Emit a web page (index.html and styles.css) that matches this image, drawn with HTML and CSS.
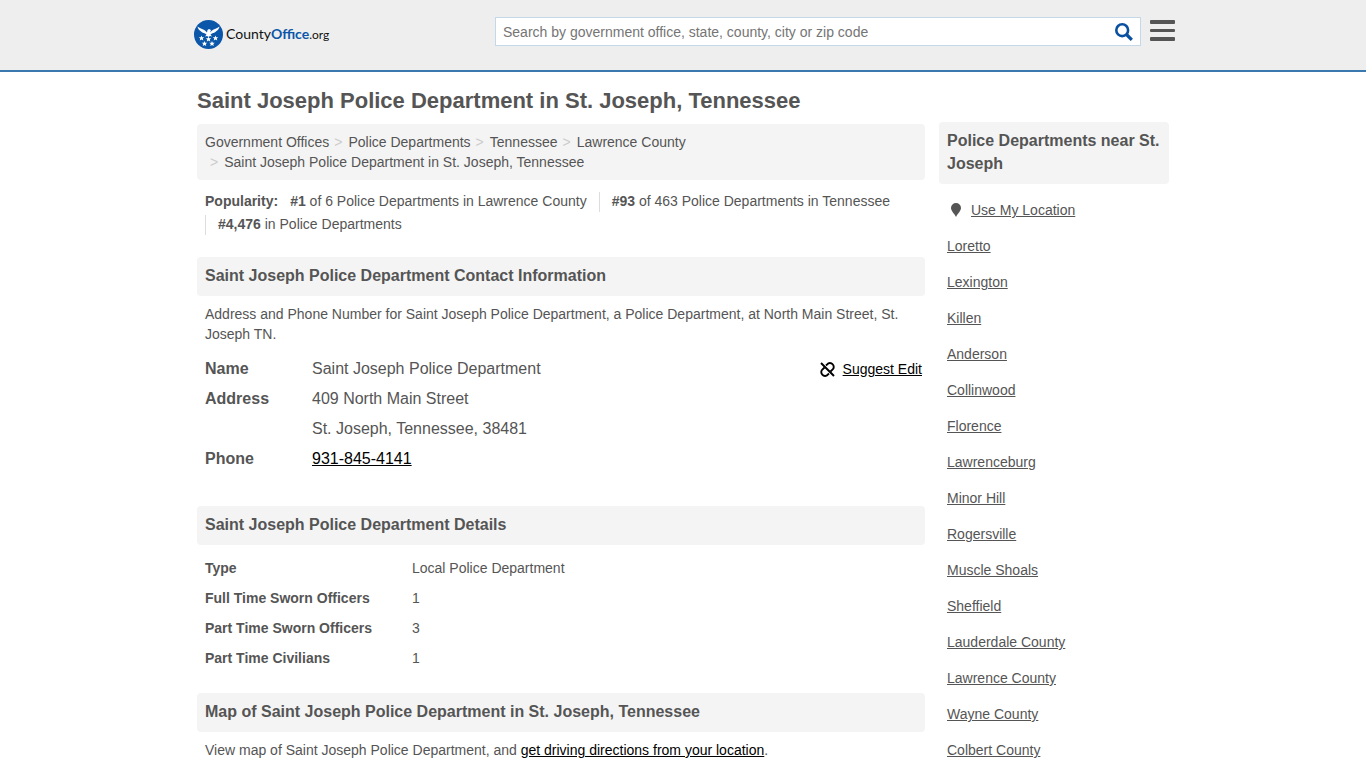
FILE: index.html
```html
<!DOCTYPE html>
<html lang="en">
  <head>
    <meta charset="UTF-8" />
    <meta name="viewport" content="width=device-width, initial-scale=1.0" />
    <title>Saint Joseph Police Department in St. Joseph, Tennessee</title>
    <link rel="stylesheet" href="styles.css">
  </head>
  <body>
    <header>
      <div class="header-inner">
        <a class="logo" href="#">
          <svg width="29" height="29" viewBox="0 0 58 58" aria-hidden="true">
            <circle cx="29" cy="29" r="29" fill="#0a56a8" />
            <path fill="#fff" d="M7 13c5 4 11 5 15 8l4 4 1-5 3-2 4 2-2 5 4-4c4-3 10-4 15-8-1 4-3 7-6 9-3 3-6 4-9 5l-3 2 3 4-4-1-3 2-3-2-4 1 3-4-3-2c-3-1-6-2-9-5-3-2-5-5-6-9z" />
            <path id="star" fill="#fff" d="M15 31l1.500 3.500h4l-3 2.500 1 4-3.500-2.200-3.500 2.200 1-4-3-2.500h4z" />
            <use href="#star" x="14" y="2" />
            <use href="#star" x="28" />
            <use href="#star" x="6" y="11" />
            <use href="#star" x="21" y="11" />
          </svg>
          <span class="logo-text">County<b>Office</b><i>.org</i></span>
        </a>
        <form class="search" role="search">
          <input type="search" aria-label="Search" placeholder="Search by government office, state, county, city or zip code" />
          <button type="submit" aria-label="Search">
            <svg width="18" height="18" viewBox="0 0 18 18" fill="none" stroke="#0a50a1">
              <circle cx="7.200" cy="7.200" r="5.900" stroke-width="2.600" />
              <path d="M11.500 11.500l5.300 5.300" stroke-width="3.200" />
            </svg>
          </button>
        </form>
        <button class="menu" type="button" aria-label="Menu">
          <svg width="25" height="21" viewBox="0 0 25 21" fill="#555">
            <rect width="25" height="4" rx="1" />
            <rect y="9" width="25" height="3" rx="1" />
            <rect y="17" width="25" height="4" rx="1" />
          </svg>
        </button>
      </div>
    </header>

    <div class="container">
      <h1>Saint Joseph Police Department in St. Joseph, Tennessee</h1>
      <div class="columns">
        <main>
          <ul class="breadcrumbs">
            <li><a href="#">Government Offices</a></li>
            <li><a href="#">Police Departments</a></li>
            <li><a href="#">Tennessee</a></li>
            <li><a href="#">Lawrence County</a></li>
            <li><a href="#">Saint Joseph Police Department in St. Joseph, Tennessee</a></li>
          </ul>

          <ul class="popularity">
            <li><b>Popularity:</b></li>
            <li><b>#1</b> of 6 Police Departments in Lawrence County</li>
            <li class="divided"><b>#93</b> of 463 Police Departments in Tennessee</li>
            <li class="divided"><b>#4,476</b> in Police Departments</li>
          </ul>

          <section class="contact">
            <h2>Saint Joseph Police Department Contact Information</h2>
            <p>Address and Phone Number for Saint Joseph Police Department, a Police Department, at North Main Street, St. Joseph TN.</p>
            <div class="contact-info">
              <table>
                <tr>
                  <th scope="row">Name</th>
                  <td>Saint Joseph Police Department</td>
                </tr>
                <tr>
                  <th scope="row">Address</th>
                  <td>409 North Main Street<br />St. Joseph, Tennessee, 38481</td>
                </tr>
                <tr>
                  <th scope="row">Phone</th>
                  <td><a href="#">931-845-4141</a></td>
                </tr>
              </table>
              <a class="suggest" href="#">
                <svg width="15" height="15" viewBox="0 0 15 15" fill="none" stroke="#000" stroke-width="1.900" aria-hidden="true">
                  <path d="M1 1l13 13" />
                  <path d="M6 3.500l1.200-1.100a3.500 3.500 0 0 1 5.500 0a3.500 3.500 0 0 1 0 5l-2.200 2.100" />
                  <path d="M4.500 5.500l-2.200 2.100a3.500 3.500 0 0 0 0 5a3.500 3.500 0 0 0 5.500 0l1.200-1.100" />
                </svg>
                <span>Suggest Edit</span>
              </a>
            </div>
          </section>

          <section class="details">
            <h2>Saint Joseph Police Department Details</h2>
            <table>
              <tr>
                <th scope="row">Type</th>
                <td>Local Police Department</td>
              </tr>
              <tr>
                <th scope="row">Full Time Sworn Officers</th>
                <td>1</td>
              </tr>
              <tr>
                <th scope="row">Part Time Sworn Officers</th>
                <td>3</td>
              </tr>
              <tr>
                <th scope="row">Part Time Civilians</th>
                <td>1</td>
              </tr>
            </table>
          </section>

          <section>
            <h2>Map of Saint Joseph Police Department in St. Joseph, Tennessee</h2>
            <p>View map of Saint Joseph Police Department, and <a href="#">get driving directions from your location</a>.</p>
          </section>
        </main>

        <aside>
          <h2>Police Departments near St. Joseph</h2>
          <ul>
            <li class="location">
              <svg width="10" height="14" viewBox="0 0 10 14" fill="#555" aria-hidden="true">
                <path d="M5 0a5 5 0 0 1 5 5c0 3-3 5-5 9-2-4-5-6-5-9a5 5 0 0 1 5-5z" />
              </svg>
              <a href="#">Use My Location</a>
            </li>
            <li><a href="#">Loretto</a></li>
            <li><a href="#">Lexington</a></li>
            <li><a href="#">Killen</a></li>
            <li><a href="#">Anderson</a></li>
            <li><a href="#">Collinwood</a></li>
            <li><a href="#">Florence</a></li>
            <li><a href="#">Lawrenceburg</a></li>
            <li><a href="#">Minor Hill</a></li>
            <li><a href="#">Rogersville</a></li>
            <li><a href="#">Muscle Shoals</a></li>
            <li><a href="#">Sheffield</a></li>
            <li><a href="#">Lauderdale County</a></li>
            <li><a href="#">Lawrence County</a></li>
            <li><a href="#">Wayne County</a></li>
            <li><a href="#">Colbert County</a></li>
          </ul>
        </aside>
      </div>
    </div>
  </body>
</html>
```

FILE: styles.css
```css
* {
  box-sizing: border-box;
}

body {
  margin: 0;
  background-color: #fff;
  color: #555;
  font-family: "Liberation Sans", Arial, sans-serif;
  font-size: 14px;
  line-height: 20px;
}

ul {
  list-style: none;
  margin: 0;
  padding: 0;
}

p {
  margin: 8px 8px 0;
}

a {
  color: #000;
}

button {
  padding: 0;
  border: none;
  background: none;
  cursor: pointer;
}

button svg {
  display: block;
}

header {
  background-color: #eee;
  border-bottom: 2px solid #3a78b0;
}

.header-inner {
  display: flex;
  align-items: flex-start;
  max-width: 984px;
  height: 70px;
  margin: 0 auto;
  padding: 17px 0 0 3px;
}

.logo {
  display: flex;
  align-items: center;
  gap: 3px;
  margin-top: 3px;
  color: #111;
  text-decoration: none;
}

.logo-text {
  font-family: Lato, sans-serif;
  font-size: 14px;
}

.logo-text b {
  color: #0a56a8;
}

.logo-text i {
  font-size: 12px;
  font-style: normal;
}

.search {
  display: flex;
  align-items: center;
  width: 646px;
  height: 29px;
  margin: 0 9px 0 auto;
  padding: 0 7px;
  background-color: #fff;
  border: 1px solid #c3d9ea;
}

.search input {
  flex: 1;
  padding: 0;
  border: none;
  outline: none;
  background: none;
  font: inherit;
  color: #555;
}

.search input::placeholder {
  color: #757575;
}

.menu {
  margin-top: 3px;
}

.container {
  max-width: 972px;
  margin: 0 auto;
}

h1 {
  margin: 0;
  padding: 16px 0 8px;
  font-size: 22px;
  line-height: 26px;
}

h2 {
  margin: 0;
  padding: 7px 8px 9px;
  background-color: #f4f4f4;
  border-radius: 4px;
  font-size: 16px;
  line-height: 23px;
}

.columns {
  display: flex;
  gap: 14px;
}

main {
  flex: 1;
  padding-top: 2px;
}

aside {
  width: 230px;
}

.breadcrumbs {
  display: flex;
  flex-wrap: wrap;
  padding: 8px;
  background-color: #f4f4f4;
  border-radius: 4px;
}

.breadcrumbs li + li::before {
  content: ">";
  margin: 0 6px 0 5px;
  color: #ccc;
}

.breadcrumbs a {
  color: #555;
  text-decoration: none;
}

.popularity {
  display: flex;
  flex-wrap: wrap;
  gap: 3px 12px;
  padding: 12px 8px 22px;
}

.popularity li {
  padding-bottom: 2px;
  line-height: 18px;
}

.popularity .divided {
  padding-left: 12px;
  border-left: 1px solid #ddd;
}

table {
  border-collapse: collapse;
  line-height: 30px;
}

th,
td {
  padding: 0;
  text-align: left;
  vertical-align: top;
}

.contact {
  margin-bottom: 32px;
}

.contact-info {
  display: flex;
  justify-content: space-between;
  align-items: flex-start;
  padding: 10px 3px 0 8px;
}

.contact-info table {
  font-size: 16px;
}

.contact-info th {
  width: 107px;
}

.suggest {
  display: flex;
  align-items: center;
  gap: 8px;
  margin-top: 5px;
  text-decoration: none;
}

.suggest span {
  text-decoration: underline;
}

.details {
  margin-bottom: 20px;
}

.details table {
  margin: 8px 8px 0;
}

.details th {
  width: 207px;
}

aside ul {
  padding: 8px 8px 0;
  line-height: 36px;
}

aside a {
  color: #555;
}

.location {
  display: flex;
  align-items: center;
  gap: 10px;
  padding-left: 4px;
}
```
